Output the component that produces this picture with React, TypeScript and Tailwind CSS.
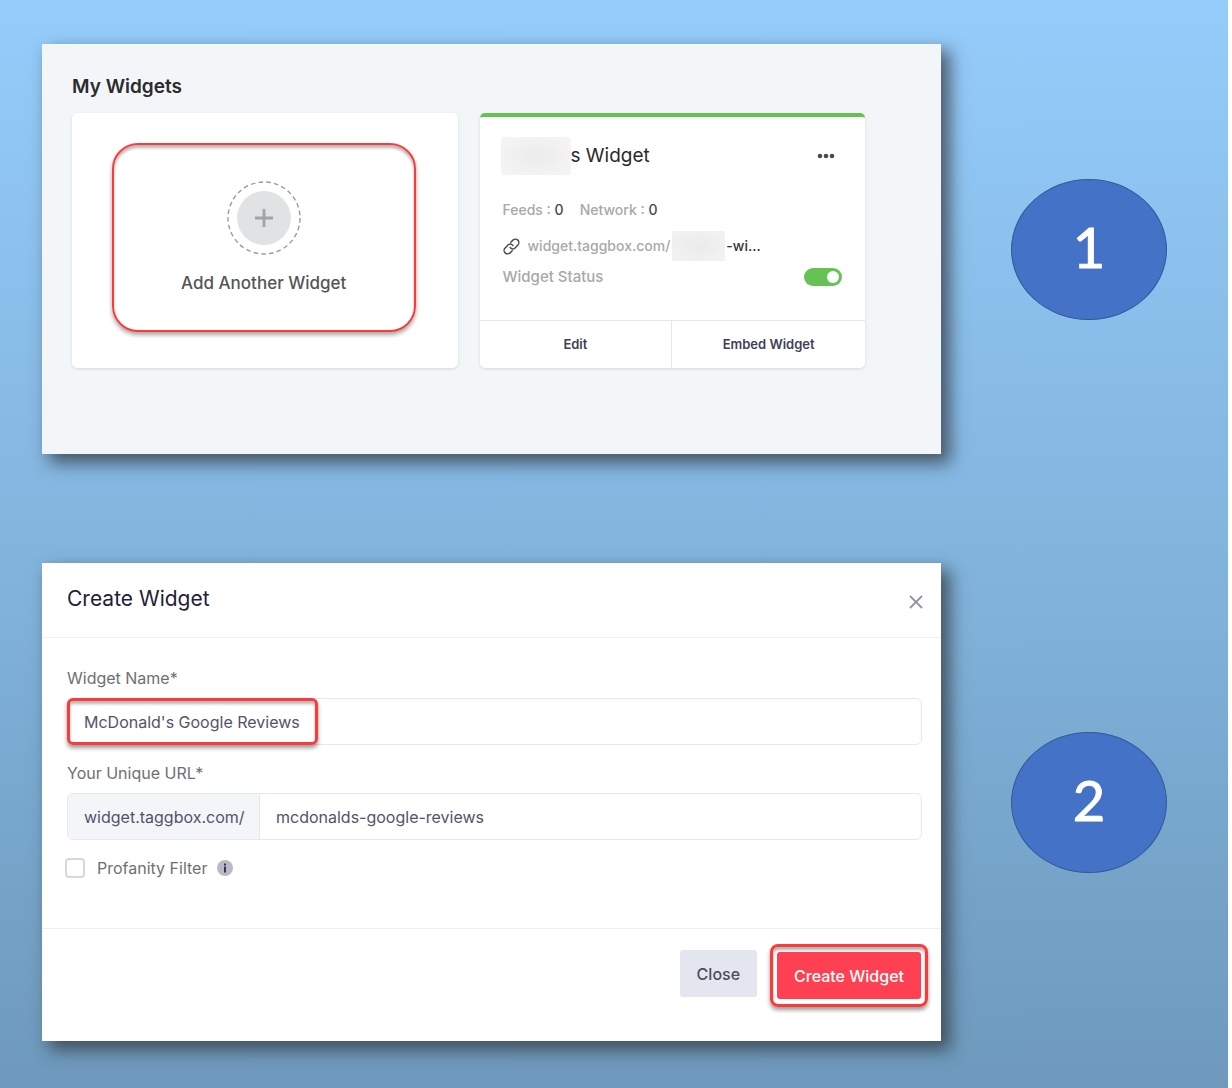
import React, { useState } from 'react';

const StepBadge = ({ value }: { value: number }) => (
    <div className="flex h-[141px] w-[156px] shrink-0 items-center justify-center rounded-[50%] border border-[#35599b] bg-[#4472c6] pb-1 font-['Lato',sans-serif] text-[56px] leading-none text-white [-webkit-text-stroke:1px_white]">
        {value}
    </div>
);

const Panel = ({ className, children }: { className: string; children: React.ReactNode }) => (
    <section className={`min-w-0 flex-1 shadow-[8px_8px_16px_1px_rgba(50,55,60,0.75)] ${className}`}>
        {children}
    </section>
);

const AddWidgetCard = () => (
    <div className="flex h-[255px] rounded-[5px] bg-white pt-[30px] pr-[42px] pb-9 pl-10 shadow-[0_1px_3px_rgba(0,0,0,0.12)]">
        <button
            type="button"
            className="flex flex-1 flex-col items-center rounded-[26px] border-2 border-[#fb3a3a] pt-9 shadow-[0_3px_4px_rgba(0,0,0,0.35),inset_0_3px_3px_rgba(0,0,0,0.28)]"
        >
            <svg width="74" height="74" viewBox="0 0 74 74" fill="none" aria-hidden="true">
                <circle cx="37" cy="37" r="36" stroke="#9b9b9b" strokeWidth="1.4" strokeDasharray="4.6 3.2" />
                <circle cx="37" cy="37" r="27" fill="#e1e2e4" />
                <path d="M37 28v18M28 37h18" stroke="#a3a3a5" strokeWidth="2.8" />
            </svg>
            <span className="mt-4 text-[17px] leading-6 font-medium text-[#555]">Add Another Widget</span>
        </button>
    </div>
);

const WidgetCard = () => {
    const [active, setActive] = useState(true);

    return (
        <div className="flex h-[255px] flex-col overflow-hidden rounded-[5px] border-t-4 border-[#67c254] bg-white shadow-[0_1px_3px_rgba(0,0,0,0.12)]">
            <div className="flex-1 pt-5 pr-[23px] pl-[23px]">
                <div className="flex items-center justify-between">
                    <h3 className="-ml-0.5 flex items-center text-[19px] leading-6 text-[#2b2b2b]">
                        <span className="h-[38px] w-[70px] bg-radial from-[#ebebeb] to-[#f6f6f7]" />
                        s Widget
                    </h3>
                    <button type="button" aria-label="Widget options" className="mr-[7px]">
                        <svg width="18" height="6" viewBox="0 0 18 6" fill="#4a4a4a">
                            <circle cx="3" cy="3" r="2.3" />
                            <circle cx="9" cy="3" r="2.3" />
                            <circle cx="15" cy="3" r="2.3" />
                        </svg>
                    </button>
                </div>

                <div className="mt-[25px] flex gap-4 text-[14px] leading-5 font-medium text-[#a8a8a8]">
                    <p>Feeds : <span className="text-[#4a4a4a]">0</span></p>
                    <p>Network : <span className="text-[#4a4a4a]">0</span></p>
                </div>

                <div className="mt-[11px] flex h-[30px] items-center text-[14px] font-medium">
                    <svg width="17" height="17" viewBox="0 0 24 24" fill="none" stroke="#4a4a4a" strokeWidth="2" strokeLinecap="round" strokeLinejoin="round" className="mr-2 shrink-0" aria-hidden="true">
                        <path d="M10 13.500a5 5 0 0 0 7 .5l4-4a4.800 4.800 0 0 0-7-7l-3 3" />
                        <path d="M14 10.500a5 5 0 0 0-7-.5l-4 4a4.800 4.800 0 0 0 7 7l3-3" />
                    </svg>
                    <a href="#widget" className="flex items-center leading-5 text-[#a8a8a8]">
                        widget.taggbox.com/
                        <span className="ml-0.5 h-[30px] w-[53px] bg-radial from-[#ebebec] to-[#f3f3f4]" />
                        <span className="ml-px text-[#333]">-wi...</span>
                    </a>
                </div>

                <label className="mt-1.5 flex items-center justify-between text-[15px] leading-5 font-medium text-[#a8a8a8]">
                    Widget Status
                    <input
                        type="checkbox"
                        role="switch"
                        checked={active}
                        onChange={() => setActive(!active)}
                        className="h-[18px] w-[38px] appearance-none rounded-full bg-gray-300 p-[3px] before:block before:size-3 before:rounded-full before:bg-white checked:bg-[#67c254] checked:before:ml-5"
                    />
                </label>
            </div>

            <div className="grid h-12 grid-cols-2 divide-x divide-[#e6e7ea] border-t border-[#e6e7ea] text-[13px] font-semibold text-[#3f3f56]">
                <button type="button">Edit</button>
                <button type="button">Embed Widget</button>
            </div>
        </div>
    );
};

const CreateWidget = () => {
    const [name, setName] = useState("McDonald's Google Reviews");
    const [url, setUrl] = useState('mcdonalds-google-reviews');

    return (
        <form onSubmit={(e) => e.preventDefault()}>
            <header className="flex h-[75px] items-center justify-between border-b border-[#f0f0f4] pr-4 pl-[25px]">
                <h2 className="pb-0.5 text-[21px] leading-6 text-[#1f2039]">Create Widget</h2>
                <button type="button" aria-label="Close dialog" className="pt-1">
                    <svg width="18" height="18" viewBox="0 0 18 18" stroke="#94959f" strokeWidth="1.8">
                        <path d="M3 3l12 12M15 3L3 15" />
                    </svg>
                </button>
            </header>

            <div className="h-[290px] pt-[30px] pr-[19px] pl-[25px] text-[16px] text-[#6f6f73]">
                <label htmlFor="widget-name" className="block leading-5">Widget Name*</label>
                <div className="relative mt-2.5">
                    <input
                        id="widget-name"
                        value={name}
                        onChange={(e) => setName(e.target.value)}
                        className="h-[47px] w-full rounded-[6px] border border-[#e7e8ef] px-4 text-[#53536b] outline-none"
                    />
                    <div className="pointer-events-none absolute inset-y-0 left-0 w-[251px] rounded-[6px] border-[3px] border-[#fb3a3a] shadow-[0_3px_4px_rgba(0,0,0,0.4),inset_0_3px_3px_rgba(0,0,0,0.28)]" />
                </div>

                <label htmlFor="widget-url" className="mt-[18px] block leading-5">Your Unique URL*</label>
                <div className="mt-2.5 flex h-[47px] overflow-hidden rounded-[6px] border border-[#e7e8ef] text-[#53536b]">
                    <span className="flex w-48 items-center border-r border-[#e7e8ef] bg-[#f2f6f9] pl-4">widget.taggbox.com/</span>
                    <input
                        id="widget-url"
                        value={url}
                        onChange={(e) => setUrl(e.target.value)}
                        className="min-w-0 flex-1 px-4 outline-none"
                    />
                </div>

                <div className="mt-4 -ml-0.5 flex items-center">
                    <input
                        id="profanity"
                        type="checkbox"
                        className="size-5 appearance-none rounded-[4px] border-2 border-[#d6d7e4] checked:bg-[#4472c6]"
                    />
                    <label htmlFor="profanity" className="ml-3 leading-6">Profanity Filter</label>
                    <svg width="16" height="16" viewBox="0 0 16 16" className="ml-2.5" aria-hidden="true">
                        <circle cx="8" cy="8" r="8" fill="#b9bac6" />
                        <path d="M7 3.500h2v2H7zM7 6.500h2v6H7z" fill="#34354c" />
                    </svg>
                </div>
            </div>

            <footer className="flex h-[113px] items-start justify-end gap-[13px] border-t border-[#eeeef5] pt-[15px] pr-[13px] text-[16px]">
                <button type="button" className="mt-1.5 h-[47px] rounded-[3px] bg-[#e3e5ef] px-[17px] font-medium text-[#4b4d5c]">Close</button>
                <div className="rounded-[8px] border-[3px] border-[#fb3a3a] px-1 py-[5px] shadow-[0_3px_4px_rgba(0,0,0,0.4),inset_0_3px_3px_rgba(0,0,0,0.3)]">
                    <button type="submit" className="h-[47px] rounded-[3px] bg-[#ff4052] px-[17px] font-medium text-white">Create Widget</button>
                </div>
            </footer>
        </form>
    );
};

const App = () => {
    return (
        <div className="min-h-screen bg-white pr-1 font-['Inter',sans-serif]">
            <main className="flex min-h-screen flex-col gap-[109px] bg-linear-to-b from-[#95ccfb] via-[#82b5de] to-[#6e99bc] pt-11 pr-[61px] pb-[47px] pl-[42px]">
                <div className="flex items-center gap-[70px]">
                    <Panel className="h-[410px] bg-[#f2f6f9] pt-[31px] pr-[76px] pl-[30px]">
                        <h2 className="text-[19px] leading-6 font-semibold text-[#2b2b2b]">My Widgets</h2>
                        <div className="mt-3.5 grid grid-cols-2 gap-[22px]">
                            <AddWidgetCard />
                            <WidgetCard />
                        </div>
                    </Panel>
                    <StepBadge value={1} />
                </div>
                <div className="flex items-center gap-[70px]">
                    <Panel className="bg-white">
                        <CreateWidget />
                    </Panel>
                    <StepBadge value={2} />
                </div>
            </main>
        </div>
    );
};

export default App;
